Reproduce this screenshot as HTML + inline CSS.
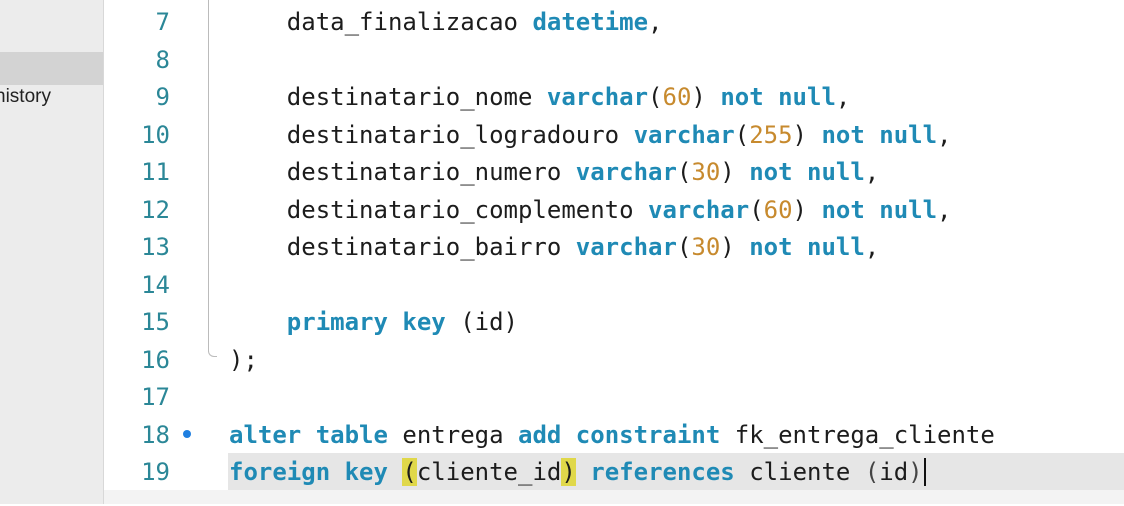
<!DOCTYPE html><html><head><style>
body{margin:0;width:1124px;height:504px;overflow:hidden;background:#fff;position:relative;font-family:"DejaVu Sans Mono","Liberation Mono",monospace;}
.sb{position:absolute;left:0;top:0;width:103px;height:504px;background:#ececec;border-right:1px solid #d8d8d8;}
.sel{position:absolute;left:0;top:52px;width:103px;height:33px;background:#d3d3d3;}
.hist{position:absolute;left:-5px;top:86px;font:19px "Liberation Sans",sans-serif;color:#222;}
.w{position:absolute;left:0;top:2px;width:1124px;height:504px;}
.ln{position:absolute;left:110px;width:60px;text-align:right;font-size:24px;line-height:37.5px;color:#2b8797;}
.c{position:absolute;left:229px;font-size:24px;line-height:37.5px;color:#1c1c1c;white-space:pre;}
.k{color:#1f8ab5;font-weight:bold}
.n{color:#c78a2e}
.p{color:#444}
.fold{position:absolute;left:208px;top:0;width:8px;height:356px;border-left:1.5px solid #bbb;border-bottom:1.5px solid #bbb;border-bottom-left-radius:6px;}
.cur{position:absolute;left:228px;top:453px;width:896px;height:37px;background:#e6e6e6;}
.bot{position:absolute;left:104px;top:490px;width:1020px;height:14px;background:#f3f3f3;}
.y{background:#e0d84a}
</style></head><body>
<div class="sb"><div class="sel"></div><div class="hist">history</div></div>
<div class="fold"></div>
<div class="cur"></div>
<div class="bot"></div>
<div class="w">
<div class="ln" style="top:2px">7</div>
<div class="ln" style="top:40px">8</div>
<div class="ln" style="top:77px">9</div>
<div class="ln" style="top:115px">10</div>
<div class="ln" style="top:152px">11</div>
<div class="ln" style="top:190px">12</div>
<div class="ln" style="top:227px">13</div>
<div class="ln" style="top:265px">14</div>
<div class="ln" style="top:302px">15</div>
<div class="ln" style="top:340px">16</div>
<div class="ln" style="top:377px">17</div>
<div class="ln" style="top:415px">18</div>
<div class="ln" style="top:452px">19</div>
<div style="position:absolute;left:183px;top:428px;width:8px;height:8px;border-radius:50%;background:#1f7fe0"></div>
<div class="c" style="top:2px">    data_finalizacao <span class="k">datetime</span>,</div>
<div class="c" style="top:77px">    destinatario_nome <span class="k">varchar</span>(<span class="n">60</span>) <span class="k">not null</span>,</div>
<div class="c" style="top:115px">    destinatario_logradouro <span class="k">varchar</span>(<span class="n">255</span>) <span class="k">not null</span>,</div>
<div class="c" style="top:152px">    destinatario_numero <span class="k">varchar</span>(<span class="n">30</span>) <span class="k">not null</span>,</div>
<div class="c" style="top:190px">    destinatario_complemento <span class="k">varchar</span>(<span class="n">60</span>) <span class="k">not null</span>,</div>
<div class="c" style="top:227px">    destinatario_bairro <span class="k">varchar</span>(<span class="n">30</span>) <span class="k">not null</span>,</div>
<div class="c" style="top:302px">    <span class="k">primary key</span> (id)</div>
<div class="c" style="top:340px">);</div>
<div class="c" style="top:415px"><span class="k">alter table</span> entrega <span class="k">add constraint</span> fk_entrega_cliente</div>
<div class="c" style="top:452px"><span class="k">foreign key</span> <span class="y">(</span>cliente_id<span class="y">)</span> <span class="k">references</span> cliente <span class="p">(</span>id<span class="p">)</span><span style="border-left:2px solid #111;margin-left:1px"></span></div>
</div>
</body></html>
